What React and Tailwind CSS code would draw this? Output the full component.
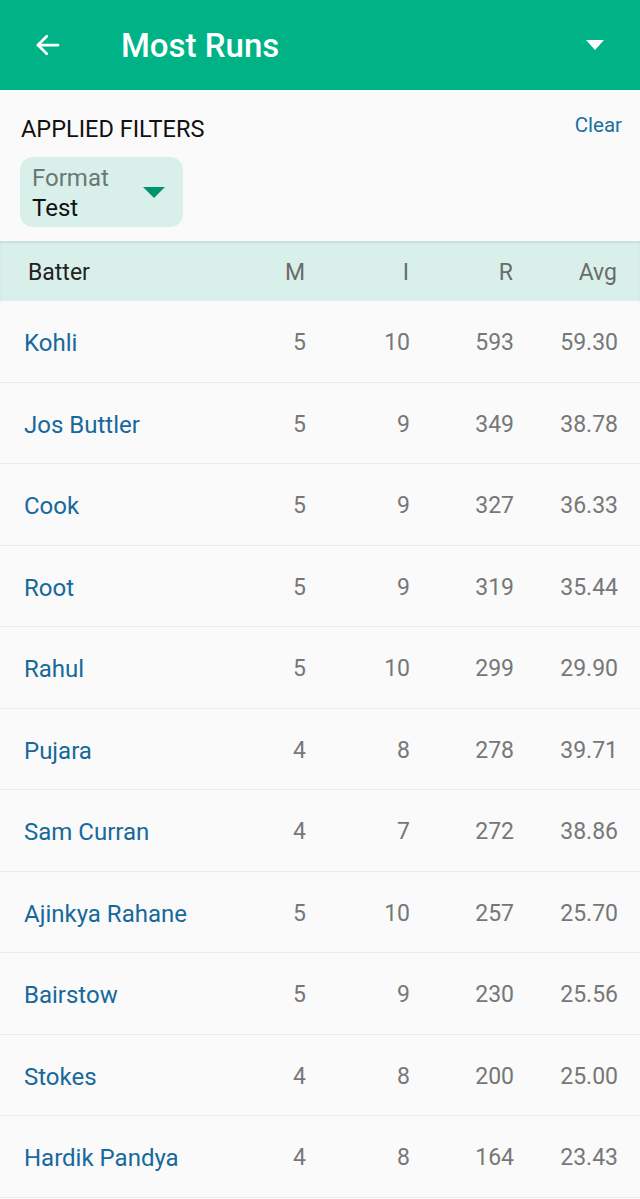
import React from 'react';

const rows = [
  { name: 'Kohli', m: 5, i: 10, r: 593, avg: '59.30' },
  { name: 'Jos Buttler', m: 5, i: 9, r: 349, avg: '38.78' },
  { name: 'Cook', m: 5, i: 9, r: 327, avg: '36.33' },
  { name: 'Root', m: 5, i: 9, r: 319, avg: '35.44' },
  { name: 'Rahul', m: 5, i: 10, r: 299, avg: '29.90' },
  { name: 'Pujara', m: 4, i: 8, r: 278, avg: '39.71' },
  { name: 'Sam Curran', m: 4, i: 7, r: 272, avg: '38.86' },
  { name: 'Ajinkya Rahane', m: 5, i: 10, r: 257, avg: '25.70' },
  { name: 'Bairstow', m: 5, i: 9, r: 230, avg: '25.56' },
  { name: 'Stokes', m: 4, i: 8, r: 200, avg: '25.00' },
  { name: 'Hardik Pandya', m: 4, i: 8, r: 164, avg: '23.43' },
];

export default function App() {
  return (
    <div className="min-h-screen bg-[#fafafa] font-['Roboto',sans-serif] overflow-hidden">
      <header className="h-[90px] bg-[#00b386] flex items-center px-[33px] text-white">
        <svg width="30" height="30" viewBox="0 0 24 24" fill="none" stroke="white" strokeWidth="2.2" strokeLinecap="round" strokeLinejoin="round">
          <path d="M20 12H4" />
          <path d="M11 5l-7 7 7 7" />
        </svg>
        <h1 className="ml-[58px] text-[33px] font-medium flex-1 mt-[1px]">Most Runs</h1>
        <svg width="18" height="10" viewBox="0 0 18 10" className="mr-[3px]">
          <path d="M0 0h18L9 10z" fill="white" />
        </svg>
      </header>

      <section className="h-[151px] pt-[25px] px-5 relative">
        <div className="flex justify-between items-start">
          <span className="text-[23.5px] text-[#111] leading-7 ml-[1px]">APPLIED FILTERS</span>
          <button className="text-[20.5px] text-[#1a6fa0] leading-6 -mt-[2px] mr-[-2px]">Clear</button>
        </div>
        <div className="mt-[14px] w-[163px] h-[70px] rounded-[13px] bg-[#d9f0ea] flex items-center pl-3 pr-[18px]">
          <div className="flex-1 flex flex-col leading-[30px] mt-[2px]">
            <span className="text-[24px] text-[#6b7874]">Format</span>
            <span className="text-[24px] text-[#111]">Test</span>
          </div>
          <svg width="22" height="11" viewBox="0 0 22 11" className="mt-[1px]">
            <path d="M0 0h22L11 11z" fill="#00936f" />
          </svg>
        </div>
      </section>

      <div className="h-[60px] bg-[#d9f0ea] flex items-center pt-[4px] pr-[23px] text-[23px] shadow-[inset_0_2px_2px_rgba(0,0,0,0.08)]">
        <span className="flex-1 pl-[28px] text-[#222]">Batter</span>
        <span className="w-[104px] text-right text-[#6b6b6b]">M</span>
        <span className="w-[104px] text-right text-[#6b6b6b]">I</span>
        <span className="w-[104px] text-right text-[#6b6b6b]">R</span>
        <span className="w-[104px] text-right text-[#6b6b6b]">Avg</span>
      </div>

      {rows.map((row) => (
        <div key={row.name} className="h-[81.5px] flex items-center pt-[4px] pr-[22px] border-b border-[#e8ecef] text-[23px]">
          <span className="flex-1 pl-6 text-[24px] text-[#16699a]">{row.name}</span>
          <span className="w-[104px] text-right text-[#777]">{row.m}</span>
          <span className="w-[104px] text-right text-[#777]">{row.i}</span>
          <span className="w-[104px] text-right text-[#777]">{row.r}</span>
          <span className="w-[104px] text-right text-[#777]">{row.avg}</span>
        </div>
      ))}
    </div>
  );
}
